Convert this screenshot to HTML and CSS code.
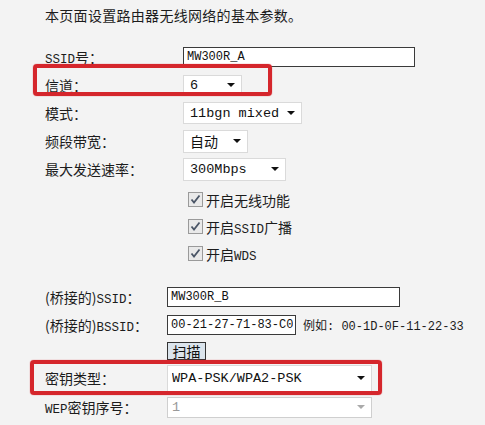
FILE: index.html
```html
<!DOCTYPE html>
<html>
<head>
  <meta charset="utf-8">
  <link rel="stylesheet" href="styles.css">
</head>
<body>
  <p class="intro">本页面设置路由器无线网络的基本参数。</p>

  <div class="form">
    <div class="row">
      <span class="label"><span class="lat">SSID</span>号：</span>
      <input class="text" style="width: 232px" type="text" value="MW300R_A">
    </div>
    <div class="row marked marked-channel">
      <span class="label">信道：</span>
      <div class="select" style="width: 59px; height: 21px"><select><option>6</option></select></div>
    </div>
    <div class="row">
      <span class="label">模式：</span>
      <div class="select" style="width: 119px; height: 22px"><select><option>11bgn mixed</option></select></div>
    </div>
    <div class="row">
      <span class="label">频段带宽：</span>
      <div class="select" style="width: 65px; height: 23px"><select class="cjk"><option>自动</option></select></div>
    </div>
    <div class="row">
      <span class="label">最大发送速率：</span>
      <div class="select" style="width: 103px; height: 23px"><select><option>300Mbps</option></select></div>
    </div>

    <div class="checks">
      <label class="check">
        <svg width="15" height="15" viewBox="0 0 15 15"><rect x="0.5" y="0.5" width="14" height="14" fill="#e9e9e9" stroke="#9a9a9a"/><path d="M3.5 7.5 L6 10.5 L11.5 3.5" fill="none" stroke="#4a5566" stroke-width="1.8"/></svg>
        <span>开启无线功能</span>
      </label>
      <label class="check">
        <svg width="15" height="15" viewBox="0 0 15 15"><rect x="0.5" y="0.5" width="14" height="14" fill="#e9e9e9" stroke="#9a9a9a"/><path d="M3.5 7.5 L6 10.5 L11.5 3.5" fill="none" stroke="#4a5566" stroke-width="1.8"/></svg>
        <span>开启<span class="lat">SSID</span>广播</span>
      </label>
      <label class="check">
        <svg width="15" height="15" viewBox="0 0 15 15"><rect x="0.5" y="0.5" width="14" height="14" fill="#e9e9e9" stroke="#9a9a9a"/><path d="M3.5 7.5 L6 10.5 L11.5 3.5" fill="none" stroke="#4a5566" stroke-width="1.8"/></svg>
        <span>开启<span class="lat">WDS</span></span>
      </label>
    </div>

    <div class="bridge">
      <div class="row">
        <span class="label label-short">(桥接的)<span class="lat">SSID</span>：</span>
        <input class="text" style="width: 233px" type="text" value="MW300R_B">
      </div>
      <div class="row">
        <span class="label label-short">(桥接的)<span class="lat">BSSID</span>：</span>
        <input class="text" style="width: 129px" type="text" value="00-21-27-71-83-C0">
        <span class="hint">例如: 00-1D-0F-11-22-33</span>
      </div>
      <div class="row row-scan">
        <span class="label label-short"></span>
        <button class="scan">扫描</button>
      </div>
      <div class="row row-tall marked marked-key">
        <span class="label label-short">密钥类型：</span>
        <div class="select wide" style="width: 205px; height: 27px"><select><option>WPA-PSK/WPA2-PSK</option></select></div>
      </div>
      <div class="row">
        <span class="label label-short"><span class="lat">WEP</span>密钥序号：</span>
        <div class="select wide disabled" style="width: 205px; height: 21px"><select disabled><option>1</option></select></div>
      </div>
      <div class="row">
        <span class="label label-short"></span>
        <div class="select wide disabled" style="width: 205px; height: 21px"></div>
      </div>
    </div>
  </div>
</body>
</html>
```

FILE: styles.css
```css
body {
  margin: 0;
  padding: 7px 0 0 45px;
  background: #f3f3f3;
  color: #1c1c1c;
  font-family: "Liberation Mono", "Noto Sans CJK SC", monospace;
  font-size: 14px;
}

.intro {
  margin: 0;
  font-family: "Noto Sans CJK SC", sans-serif;
  font-size: 14px;
  letter-spacing: 0.3px;
  line-height: 16px;
}

.form {
  margin-top: 20px;
}

.row {
  display: flex;
  align-items: center;
  height: 28px;
}

.row-scan {
  height: 24px;
}

.row-tall {
  height: 30px;
}

.label {
  width: 138px;
  flex-shrink: 0;
  font-family: "Noto Sans CJK SC", sans-serif;
}

.label-short {
  width: 122px;
}

.lat {
  font-family: "Liberation Mono", monospace;
  font-size: 12.5px;
}

/* annotation boxes drawn over the screenshot */
.marked {
  position: relative;
}

.marked::after {
  content: '';
  position: absolute;
  border: 4px solid #d5262c;
  border-radius: 4px;
  box-shadow: 0 0 1px #d5262c;
  pointer-events: none;
}

.marked-channel::after {
  left: -12px;
  top: -7px;
  width: 231px;
  height: 24px;
}

.marked-key::after {
  left: -15px;
  top: -3px;
  width: 344px;
  height: 27px;
}

.text {
  box-sizing: border-box;
  height: 20px;
  margin: 0;
  padding: 0 2px 0 3px;
  border: 1px solid #3a3a3a;
  background: #fff;
  font-family: "Liberation Mono", monospace;
  font-size: 12px;
  color: #111;
}

.hint {
  margin-left: 7px;
  font-family: "Liberation Mono", "Noto Sans CJK SC", monospace;
  font-size: 12px;
}

.select {
  position: relative;
  box-sizing: border-box;
  border: 1px solid #dadada;
  background: #fff;
}

.select select {
  appearance: none;
  -webkit-appearance: none;
  width: 100%;
  height: 100%;
  margin: 0;
  padding: 0 0 0 6px;
  border: none;
  background: transparent;
  font-family: "Liberation Mono", "Noto Sans CJK SC", monospace;
  font-size: 13.5px;
  color: #111;
  opacity: 1;
}

.select select.cjk {
  font-family: "Noto Sans CJK SC", sans-serif;
  font-size: 14px;
}

.select.wide select {
  padding-left: 4px;
}

.select::after {
  content: '';
  position: absolute;
  right: 6px;
  top: 50%;
  margin-top: -2px;
  border-left: 4px solid transparent;
  border-right: 4px solid transparent;
  border-top: 4px solid #111;
}

.select.disabled {
  border-color: #cfcfcf;
}

.select.disabled select {
  color: #9a9a9a;
}

.select.disabled::after {
  border-top-color: #aaa;
}

.checks {
  margin: 3px 0 0 143px;
}

.check {
  display: flex;
  align-items: center;
  gap: 3px;
  height: 27px;
  font-family: "Noto Sans CJK SC", sans-serif;
}

.bridge {
  margin-top: 16px;
}

.scan {
  box-sizing: border-box;
  width: 39px;
  height: 18px;
  margin: 0;
  padding: 0;
  border: 1px solid #333;
  background: #dbe4ec;
  font-family: "Noto Sans CJK SC", sans-serif;
  font-size: 14px;
  line-height: 16px;
  color: #111;
}
```
